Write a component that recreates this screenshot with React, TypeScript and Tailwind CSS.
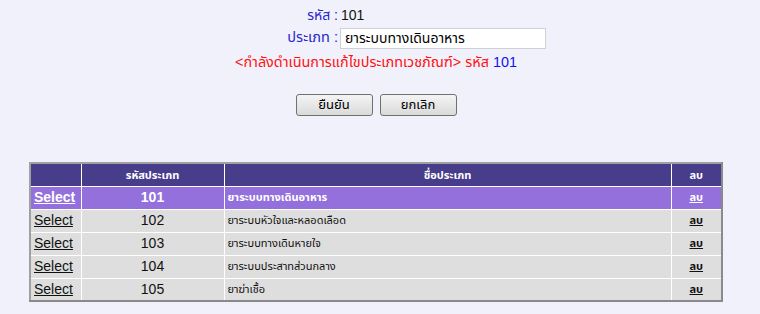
import React from "react";

type Row = { id: string; name: string };

const rows: Row[] = [
  { id: "101", name: "ยาระบบทางเดินอาหาร" },
  { id: "102", name: "ยาระบบหัวใจและหลอดเลือด" },
  { id: "103", name: "ยาระบบทางเดินหายใจ" },
  { id: "104", name: "ยาระบบประสาทส่วนกลาง" },
  { id: "105", name: "ยาฆ่าเชื้อ" },
];

const font = "font-['Tahoma','Liberation_Sans','Noto_Sans_Thai','DejaVu_Sans',sans-serif]";

// === Form section ===
const EditForm: React.FC = () => (
  <div className="pt-[6px]">
    <div className="grid grid-cols-[338px_auto] items-center gap-y-[2px]">
      <span className="text-right text-[14px] text-[#2727cf] leading-[18px]">รหัส :</span>
      <span className="pl-[3px] text-[14px] text-[#111] leading-[18px]">101</span>
      <span className="text-right text-[14.5px] text-[#2727cf]">ประเภท :</span>
      <div className="pl-[2px]">
        <input
          readOnly
          value="ยาระบบทางเดินอาหาร"
          className={`w-[206px] h-[21px] border border-[#cfcfd6] bg-white px-[4px] text-[14px] text-black outline-none ${font}`}
        />
      </div>
    </div>
    <div className="w-[752px] text-center text-[14.4px] leading-[22px] mt-[1px]">
      <span className="text-[#ff1010]">&lt;กำลังดำเนินการแก้ไขประเภทเวชภัณฑ์&gt; รหัส</span>{" "}
      <span className="text-[#1010f0]">101</span>
    </div>
    <div className="w-[752px] flex justify-center gap-[7px] mt-[21px]">
      {["ยืนยัน", "ยกเลิก"].map((label) => (
        <button
          key={label}
          className={`w-[77px] h-[22px] rounded-[3px] border border-[#707070] bg-gradient-to-b from-[#f4f4f4] to-[#dadada] text-[13px] text-black ${font}`}
        >
          {label}
        </button>
      ))}
    </div>
  </div>
);

// === Grid section ===
const TypeGrid: React.FC = () => (
  <div className="pl-[29px] mt-[46px]">
    <table className="w-[694px] border-2 border-t-[#a0a0a0] border-l-[#a0a0a0] border-r-[#8a8a8a] border-b-[#8a8a8a] border-collapse">
      <thead>
        <tr className="h-[23px] bg-[#483d8b] text-white text-[11px] font-bold">
          <th className="w-[51px] border border-white border-t-0 border-l-0"></th>
          <th className="w-[143px] border border-white border-t-0">รหัสประเภท</th>
          <th className="border border-white border-t-0">ชื่อประเภท</th>
          <th className="w-[51px] border border-white border-t-0 border-r-0">ลบ</th>
        </tr>
      </thead>
      <tbody>
        {rows.map((row, i) => {
          const selected = i === 0;
          const rowCls = selected ? "bg-[#9370db] text-white font-bold" : "bg-[#dedede] text-[#111]";
          const cell = i === rows.length - 1 ? "border border-white border-b-0" : "border border-white";
          return (
            <tr key={row.id} className={`h-[23px] ${rowCls}`}>
              <td className={`${cell} border-l-0 pl-[3px] text-[14px]`}>
                <a className="underline cursor-pointer">Select</a>
              </td>
              <td className={`${cell} text-center text-[14px]`}>{row.id}</td>
              <td className={`${cell} pl-[3px] text-[11px]`}>{row.name}</td>
              <td className={`${cell} border-r-0 text-center text-[11px] font-bold`}>
                <a className="underline cursor-pointer">ลบ</a>
              </td>
            </tr>
          );
        })}
      </tbody>
    </table>
  </div>
);

export default function App() {
  return (
    <div className={`w-[760px] h-[314px] bg-[#f1f1fb] overflow-hidden ${font}`}>
      <EditForm />
      <TypeGrid />
    </div>
  );
}
